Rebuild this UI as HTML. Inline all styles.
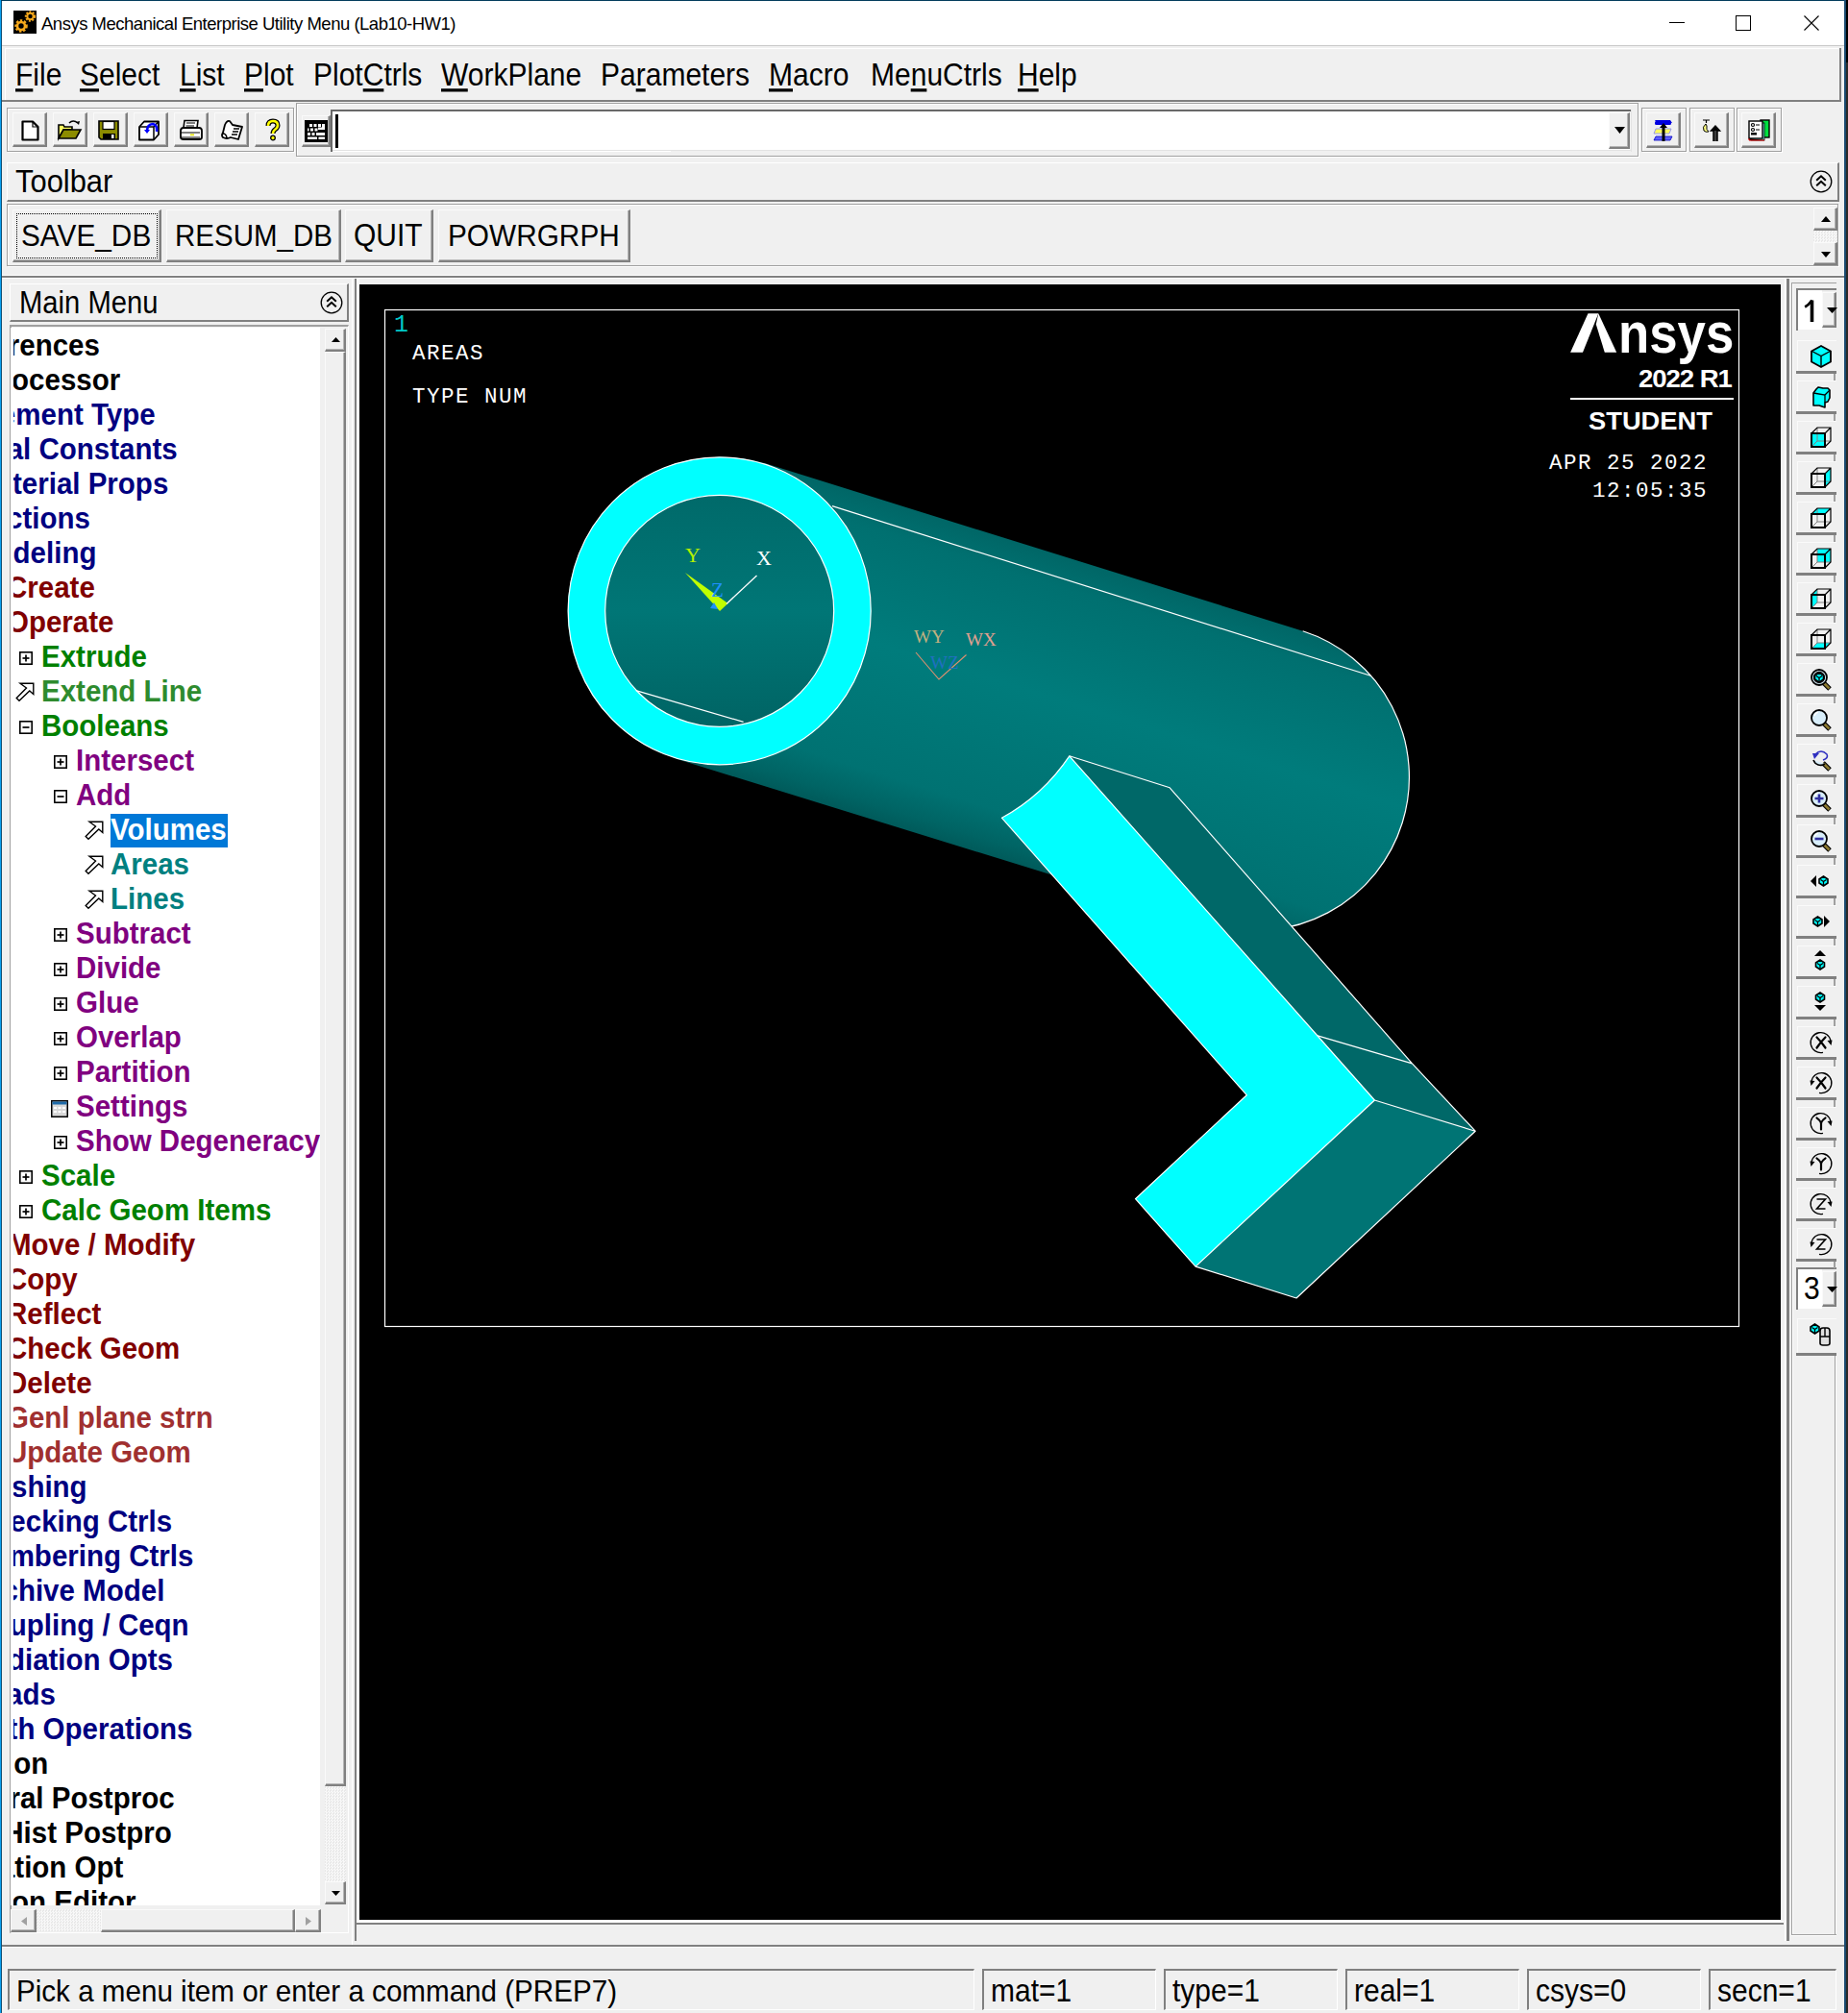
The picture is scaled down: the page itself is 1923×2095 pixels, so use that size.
<!DOCTYPE html><html><head><meta charset="utf-8"><style>
*{box-sizing:border-box;margin:0;padding:0}
html,body{width:1923px;height:2095px;overflow:hidden;background:#f0f0f0;font-family:"Liberation Sans",sans-serif;color:#000}
.a{position:absolute}
.t{position:absolute;white-space:nowrap;line-height:1}
svg{position:absolute;overflow:visible}
.btn{position:absolute;background:#f0f0f0;border-top:1px solid #fff;border-left:1px solid #fff;border-right:2px solid #696969;border-bottom:2px solid #696969}
.btn:before{content:"";position:absolute;left:0;top:0;right:0;bottom:0;border-top:1px solid #e3e3e3;border-left:1px solid #e3e3e3;border-right:1px solid #a0a0a0;border-bottom:1px solid #a0a0a0}
.grp{position:absolute;border-top:1px solid #a0a0a0;border-left:1px solid #a0a0a0;border-right:1px solid #fff;border-bottom:1px solid #fff;box-shadow:1px 1px 0 #a0a0a0, inset 1px 1px 0 #fff}
.rz{position:absolute;border-top:1px solid #fff;border-left:1px solid #fff;border-right:2px solid #808080;border-bottom:2px solid #808080}
.sk{position:absolute;border-top:2px solid #808080;border-left:2px solid #808080;border-right:1px solid #fff;border-bottom:1px solid #fff}
.f30{font-size:30px}
.sy{transform:scaleY(1.08);transform-origin:0 83.3%}
.mm{font-size:29.5px;font-weight:bold}
u{text-decoration:underline;text-decoration-thickness:3px;text-underline-offset:3px;text-decoration-skip-ink:none}
</style></head><body>
<div class="a" style="left:0px;top:0px;width:1923px;height:1px;background:#033d5c;"></div>
<div class="a" style="left:0px;top:0px;width:1px;height:2095px;background:#0aa0f0;"></div>
<div class="a" style="left:1px;top:1px;width:1px;height:2094px;background:#114e72;"></div>
<div class="a" style="left:1919px;top:0px;width:2px;height:2095px;background:#1a4a70;"></div>
<div class="a" style="left:1921px;top:0px;width:2px;height:65px;background:#000;"></div>
<div class="a" style="left:1921px;top:65px;width:2px;height:2030px;background:#2b2a28;"></div>
<div class="a" style="left:2px;top:1px;width:1917px;height:46px;background:#fff;"></div>
<div class="a" style="left:2px;top:47px;width:1917px;height:1px;background:#c8c8c8;"></div>
<svg style="left:14px;top:11px" width="24" height="24" viewBox="0 0 24 24">
<rect width="24" height="24" fill="#000"/>
<g fill="none" stroke="#f5a81c" stroke-width="3.2" stroke-dasharray="2.2 1.6"><circle cx="8" cy="16" r="5.2"/></g>
<circle cx="8" cy="16" r="4" fill="none" stroke="#f5a81c" stroke-width="2.6"/>
<g fill="none" stroke="#f5a81c" stroke-width="2.6" stroke-dasharray="1.8 1.4"><circle cx="17.5" cy="6" r="4.4"/></g>
<circle cx="17.5" cy="6" r="3.2" fill="none" stroke="#f5a81c" stroke-width="2"/>
</svg>
<div class="t" style="left:43px;top:15.6px;font-size:18.5px;color:#000;letter-spacing:-0.49px">Ansys Mechanical Enterprise Utility Menu (Lab10-HW1)</div>
<div class="a" style="left:1737px;top:23px;width:16px;height:1px;background:#000;"></div>
<div class="a" style="left:1806px;top:16px;width:16px;height:16px;border:1px solid #000"></div>
<svg style="left:1877px;top:16px" width="16" height="16" viewBox="0 0 16 16"><path d="M0.5 0.5L15.5 15.5M15.5 0.5L0.5 15.5" stroke="#000" stroke-width="1.1"/></svg>
<div class="a" style="left:5px;top:50px;width:1911px;height:1px;background:#fff;"></div>
<div class="a" style="left:5px;top:50px;width:1px;height:54px;background:#fff;"></div>
<div class="a" style="left:2px;top:104px;width:1914px;height:2px;background:#808080;"></div>
<div class="a" style="left:1914px;top:50px;width:2px;height:56px;background:#808080;"></div>
<div class="t sy" style="left:16px;top:64.01px;font-size:30px;color:#000;"><u>F</u>ile</div>
<div class="t sy" style="left:83px;top:64.01px;font-size:30px;color:#000;"><u>S</u>elect</div>
<div class="t sy" style="left:187px;top:64.01px;font-size:30px;color:#000;"><u>L</u>ist</div>
<div class="t sy" style="left:254px;top:64.01px;font-size:30px;color:#000;"><u>P</u>lot</div>
<div class="t sy" style="left:326px;top:64.01px;font-size:30px;color:#000;">Plot<u>C</u>trls</div>
<div class="t sy" style="left:459px;top:64.01px;font-size:30px;color:#000;"><u>W</u>orkPlane</div>
<div class="t sy" style="left:625px;top:64.01px;font-size:30px;color:#000;">Pa<u>r</u>ameters</div>
<div class="t sy" style="left:800px;top:64.01px;font-size:30px;color:#000;"><u>M</u>acro</div>
<div class="t sy" style="left:906px;top:64.01px;font-size:30px;color:#000;">Me<u>n</u>uCtrls</div>
<div class="t sy" style="left:1059px;top:64.01px;font-size:30px;color:#000;"><u>H</u>elp</div>
<div class="a" style="left:7px;top:112px;width:299px;height:46px;border-top:1px solid #a0a0a0;border-left:1px solid #a0a0a0;border-right:1px solid #a0a0a0;border-bottom:1px solid #a0a0a0;box-shadow:inset 1px 1px 0 #fff, 1px 1px 0 #fff"></div>
<div class="a" style="left:13px;top:117px;width:36px;height:36px;background:#f0f0f0;border-top:1px solid #fafafa;border-left:1px solid #fafafa;border-right:2px solid #808080;border-bottom:2px solid #808080;box-shadow:inset -1px -1px 0 #b4b4b4"><svg style="left:8px;top:7px" width="20" height="22" viewBox="0 0 20 22"><path d="M1.5 1.5H12L17.5 7V20.5H1.5Z" fill="#fff" stroke="#000" stroke-width="2.2" stroke-linejoin="round"/><path d="M12 1.5V7H17.5" fill="none" stroke="#000" stroke-width="1.2"/></svg></div>
<div class="a" style="left:55px;top:117px;width:36px;height:36px;background:#f0f0f0;border-top:1px solid #fafafa;border-left:1px solid #fafafa;border-right:2px solid #808080;border-bottom:2px solid #808080;box-shadow:inset -1px -1px 0 #b4b4b4"><svg style="left:4px;top:6px" width="26" height="22" viewBox="0 0 26 22"><path d="M1 6H6L7 8H15V11H6L1 20Z" fill="#ffff60" stroke="#000" stroke-width="1.6"/><path d="M1 20L6 11H24L19 20Z" fill="#8c8c00" stroke="#000" stroke-width="1.6"/><path d="M12 4Q16 0 21 4" fill="none" stroke="#000" stroke-width="1.6"/><path d="M19 3L23 2L22 6Z" fill="#000"/></svg></div>
<div class="a" style="left:97px;top:117px;width:36px;height:36px;background:#f0f0f0;border-top:1px solid #fafafa;border-left:1px solid #fafafa;border-right:2px solid #808080;border-bottom:2px solid #808080;box-shadow:inset -1px -1px 0 #b4b4b4"><svg style="left:4px;top:7px" width="24" height="24" viewBox="0 0 24 24"><path d="M1 1H21V20H3L1 18Z" fill="#8c8c00" stroke="#000" stroke-width="1.6"/><rect x="5" y="1.5" width="12" height="8" fill="#fff" stroke="#000" stroke-width="1.2"/><rect x="5" y="14" width="13" height="6" fill="#000"/><rect x="14" y="15" width="2.5" height="4" fill="#fff"/></svg></div>
<div class="a" style="left:139px;top:117px;width:36px;height:36px;background:#f0f0f0;border-top:1px solid #fafafa;border-left:1px solid #fafafa;border-right:2px solid #808080;border-bottom:2px solid #808080;box-shadow:inset -1px -1px 0 #b4b4b4"><svg style="left:4px;top:7px" width="24" height="24" viewBox="0 0 24 24"><path d="M1 7L6 1.5H21V15L16 20.5H1Z" fill="#fff" stroke="#000" stroke-width="1.8" stroke-linejoin="round"/><path d="M1 7H16V20.5M16 7L21 1.5" fill="none" stroke="#000" stroke-width="1.5"/><path d="M9 12Q9 4 15 4Q20 5 19 12" fill="none" stroke="#0000ff" stroke-width="2.6"/><path d="M6 10H12L9 14Z" fill="#0000ff"/></svg></div>
<div class="a" style="left:181px;top:117px;width:36px;height:36px;background:#f0f0f0;border-top:1px solid #fafafa;border-left:1px solid #fafafa;border-right:2px solid #808080;border-bottom:2px solid #808080;box-shadow:inset -1px -1px 0 #b4b4b4"><svg style="left:4px;top:6px" width="26" height="24" viewBox="0 0 26 24"><path d="M6 1.5H20L19 9H5Z" fill="#fff" stroke="#000" stroke-width="1.6"/><path d="M8 4H17M7.5 7H16" stroke="#000" stroke-width="1.2"/><path d="M2 12Q2 9 5 9H21Q24 9 24 12V19Q24 21 21 21H5Q2 21 2 19Z" fill="#fff" stroke="#000" stroke-width="1.8"/><path d="M2 14H22M2 19H22" stroke="#000" stroke-width="1.2"/><rect x="12" y="15.5" width="4" height="1.6" fill="#e0e000"/></svg></div>
<div class="a" style="left:223px;top:117px;width:36px;height:36px;background:#f0f0f0;border-top:1px solid #fafafa;border-left:1px solid #fafafa;border-right:2px solid #808080;border-bottom:2px solid #808080;box-shadow:inset -1px -1px 0 #b4b4b4"><svg style="left:5px;top:6px" width="26" height="24" viewBox="0 0 26 24"><path d="M5 6Q7 1 10 2L13 6L23 8L19 21L11 19Q7 21 3 19Q1 17 3 14Z" fill="#fff" stroke="#000" stroke-width="1.8" stroke-linejoin="round"/><path d="M14 10H20M13 13H19M12 16H18M3 15Q6 15 7 19" fill="none" stroke="#000" stroke-width="1.5"/></svg></div>
<div class="a" style="left:265px;top:117px;width:36px;height:36px;background:#f0f0f0;border-top:1px solid #fafafa;border-left:1px solid #fafafa;border-right:2px solid #808080;border-bottom:2px solid #808080;box-shadow:inset -1px -1px 0 #b4b4b4"><svg style="left:10px;top:6px" width="16" height="24" viewBox="0 0 16 24"><path d="M3 7Q3 2 8 2Q13 2 13 6.5Q13 9 10 11Q8 12.5 8 15" fill="none" stroke="#000" stroke-width="5"/><path d="M3 7Q3 2 8 2Q13 2 13 6.5Q13 9 10 11Q8 12.5 8 15" fill="none" stroke="#ffff00" stroke-width="2.6"/><circle cx="8" cy="19.5" r="2.3" fill="#ffff00" stroke="#000" stroke-width="1.3"/></svg></div>
<div class="a" style="left:308px;top:107px;width:1397px;height:56px;border-top:1px solid #a0a0a0;border-left:1px solid #a0a0a0;border-right:1px solid #a0a0a0;border-bottom:1px solid #a0a0a0;box-shadow:inset 1px 1px 0 #fff, 1px 1px 0 #fff"></div>
<div class="a" style="left:314px;top:120px;width:30px;height:33px;background:#f0f0f0;border-top:1px solid #fafafa;border-left:1px solid #fafafa;border-right:2px solid #808080;border-bottom:2px solid #808080;box-shadow:inset -1px -1px 0 #b4b4b4"><svg style="left:2px;top:4px" width="24" height="23" viewBox="0 0 24 23"><rect width="24" height="23" fill="#000"/><g fill="#fff"><rect x="5" y="4" width="3" height="3"/><rect x="9.5" y="4" width="3" height="3"/><rect x="14" y="4" width="3" height="3"/><path d="M18 4H21V10H14V7.5H18Z"/><rect x="3" y="8.5" width="1.5" height="3"/><rect x="6" y="8.5" width="3" height="3"/><rect x="10.5" y="8.5" width="3" height="3"/><rect x="3" y="13" width="3" height="3"/><rect x="7.5" y="13" width="3" height="3"/><rect x="12" y="13" width="9" height="3"/><rect x="3" y="17.5" width="10" height="2.5"/><rect x="14.5" y="17.5" width="6.5" height="2.5"/></g></svg></div>
<div class="a" style="left:344px;top:114px;width:354px;height:44px;border-top:2px solid #696969;border-left:2px solid #696969;background:#fff"></div>
<div class="a" style="left:346px;top:116px;width:1350px;height:41px;background:#fff;"></div>
<div class="a" style="left:344px;top:114px;width:1354px;height:2px;background:#696969;"></div>
<div class="a" style="left:344px;top:114px;width:2px;height:44px;background:#696969;"></div>
<div class="a" style="left:346px;top:156px;width:1352px;height:1px;background:#e3e3e3;"></div>
<div class="a" style="left:1697px;top:114px;width:1px;height:44px;background:#e3e3e3;"></div>
<div class="a" style="left:349px;top:119px;width:3px;height:35px;background:#000;"></div>
<div class="a" style="left:1674px;top:117px;width:22px;height:38px;background:#f0f0f0;border-top:1px solid #fafafa;border-left:1px solid #fafafa;border-right:2px solid #808080;border-bottom:2px solid #808080;box-shadow:inset -1px -1px 0 #b4b4b4"><svg style="left:5px;top:14px" width="11" height="7" viewBox="0 0 11 7"><path d="M0 0H11L5.5 7Z" fill="#000"/></svg></div>
<div class="a" style="left:1708px;top:112px;width:47px;height:46px;border-top:1px solid #a0a0a0;border-left:1px solid #a0a0a0;border-right:1px solid #a0a0a0;border-bottom:1px solid #a0a0a0;box-shadow:inset 1px 1px 0 #fff, 1px 1px 0 #fff"></div>
<div class="a" style="left:1758px;top:112px;width:47px;height:46px;border-top:1px solid #a0a0a0;border-left:1px solid #a0a0a0;border-right:1px solid #a0a0a0;border-bottom:1px solid #a0a0a0;box-shadow:inset 1px 1px 0 #fff, 1px 1px 0 #fff"></div>
<div class="a" style="left:1807px;top:112px;width:47px;height:46px;border-top:1px solid #a0a0a0;border-left:1px solid #a0a0a0;border-right:1px solid #a0a0a0;border-bottom:1px solid #a0a0a0;box-shadow:inset 1px 1px 0 #fff, 1px 1px 0 #fff"></div>
<div class="a" style="left:1713px;top:117px;width:36px;height:37px;background:#f0f0f0;border-top:1px solid #fafafa;border-left:1px solid #fafafa;border-right:2px solid #808080;border-bottom:2px solid #808080;box-shadow:inset -1px -1px 0 #b4b4b4"><svg style="left:5px;top:6px" width="24" height="24" viewBox="0 0 24 24"><path d="M3 1H19L21 4H5Z" fill="#0000e0"/><rect x="3" y="2" width="17" height="4" rx="1.5" fill="#0000e0"/><path d="M4 10H20L18 15H2Z" fill="#ffff60" stroke="#8080ff" stroke-width="0.8"/><path d="M4 18H21L19 22H2Z" fill="#6060ff" stroke="#0000c0" stroke-width="0.8"/><path d="M10.5 23V9H8L12 4L16 9H13.5V23Z" fill="#000"/></svg></div>
<div class="a" style="left:1763px;top:117px;width:36px;height:37px;background:#f0f0f0;border-top:1px solid #fafafa;border-left:1px solid #fafafa;border-right:2px solid #808080;border-bottom:2px solid #808080;box-shadow:inset -1px -1px 0 #b4b4b4"><svg style="left:5px;top:5px" width="26" height="26" viewBox="0 0 26 26"><path d="M3 2H10M6.5 2V5" stroke="#000" stroke-width="1.2"/><path d="M6 6Q2 9 4 13Q6 15 9 14Q6 12 7 8Z" fill="#ffff80" stroke="#000" stroke-width="1"/><path d="M14 24V13H11.5L16 8L20.5 13H18V24" fill="none" stroke="#000" stroke-width="1.5"/><path d="M12 13L16 8L20 13Z" fill="#000"/><path d="M15 13V24M17 13V24" stroke="#000" stroke-width="1.5"/></svg></div>
<div class="a" style="left:1812px;top:117px;width:36px;height:37px;background:#f0f0f0;border-top:1px solid #fafafa;border-left:1px solid #fafafa;border-right:2px solid #808080;border-bottom:2px solid #808080;box-shadow:inset -1px -1px 0 #b4b4b4"><svg style="left:5px;top:5px" width="26" height="26" viewBox="0 0 26 26"><rect x="14" y="2" width="9" height="18" fill="#00e040" stroke="#000" stroke-width="1.4"/><rect x="4" y="5" width="14" height="18" fill="#80e0e0" stroke="#000" stroke-width="0.8"/><rect x="2" y="3" width="14" height="18" fill="#fff" stroke="#000" stroke-width="1.4"/><path d="M2 21V23H18" stroke="#e00000" stroke-width="1"/><g stroke="#000" stroke-width="1.2" fill="none"><circle cx="6" cy="7" r="1.5"/><circle cx="6" cy="12" r="1.5"/><path d="M9 7H13M9 12H13"/></g><rect x="4" y="15" width="6" height="2.5" fill="#000"/></svg></div>
<div class="a" style="left:7px;top:169px;width:1907px;height:41px;border-top:1px solid #fff;border-left:1px solid #fff;border-right:2px solid #808080;border-bottom:2px solid #808080"></div>
<div class="t sy" style="left:16px;top:175.01px;font-size:30px;color:#000;transform:scale(1.03,1.08)">Toolbar</div>
<svg style="left:1883px;top:177px" width="24" height="24" viewBox="0 0 24 24"><circle cx="12" cy="12" r="10.8" fill="none" stroke="#000" stroke-width="1.3"/><path d="M7.2 10.8L12 6.3L16.8 10.8M7.2 16.3L12 11.8L16.8 16.3" fill="none" stroke="#000" stroke-width="2"/></svg>
<div class="a" style="left:7px;top:212px;width:1906px;height:65px;border-top:1px solid #a0a0a0;border-left:1px solid #a0a0a0;border-right:1px solid #a0a0a0;border-bottom:1px solid #a0a0a0;box-shadow:inset 1px 1px 0 #fff, 1px 1px 0 #fff"></div>
<div class="a" style="left:13px;top:218px;width:155px;height:55px;background:#f0f0f0;border-top:1px solid #fafafa;border-left:1px solid #fafafa;border-right:2px solid #808080;border-bottom:2px solid #808080;box-shadow:inset -1px -1px 0 #b4b4b4"></div>
<div class="a" style="left:173px;top:218px;width:182px;height:55px;background:#f0f0f0;border-top:1px solid #fafafa;border-left:1px solid #fafafa;border-right:2px solid #808080;border-bottom:2px solid #808080;box-shadow:inset -1px -1px 0 #b4b4b4"></div>
<div class="a" style="left:359px;top:218px;width:92px;height:55px;background:#f0f0f0;border-top:1px solid #fafafa;border-left:1px solid #fafafa;border-right:2px solid #808080;border-bottom:2px solid #808080;box-shadow:inset -1px -1px 0 #b4b4b4"></div>
<div class="a" style="left:456px;top:218px;width:200px;height:55px;background:#f0f0f0;border-top:1px solid #fafafa;border-left:1px solid #fafafa;border-right:2px solid #808080;border-bottom:2px solid #808080;box-shadow:inset -1px -1px 0 #b4b4b4"></div>
<div class="t sy" style="left:22px;top:231.18px;font-size:29.8px;color:#000;">SAVE_DB</div>
<div class="a" style="left:17px;top:222px;width:147px;height:47px;border:1px dotted #000"></div>
<div class="t sy" style="left:182px;top:231.43px;font-size:29.5px;color:#000;">RESUM_DB</div>
<div class="t sy" style="left:368px;top:231.01px;font-size:30px;color:#000;">QUIT</div>
<div class="t sy" style="left:466px;top:231.18px;font-size:29.8px;color:#000;">POWRGRPH</div>
<div class="a" style="left:1887px;top:216px;width:25px;height:24px;background:#f0f0f0;border-top:1px solid #fafafa;border-left:1px solid #fafafa;border-right:2px solid #808080;border-bottom:2px solid #808080;box-shadow:inset -1px -1px 0 #b4b4b4"><svg style="left:7px;top:8px" width="10" height="6" viewBox="0 0 10 6"><path d="M0 6H10L5 0Z" fill="#000"/></svg></div>
<div class="a" style="left:1887px;top:240px;width:25px;height:12px;background:repeating-conic-gradient(#f8f8f8 0 25%,#e8e8e8 0 50%) 0 0/3px 3px"></div>
<div class="a" style="left:1887px;top:252px;width:25px;height:24px;background:#f0f0f0;border-top:1px solid #fafafa;border-left:1px solid #fafafa;border-right:2px solid #808080;border-bottom:2px solid #808080;box-shadow:inset -1px -1px 0 #b4b4b4"><svg style="left:7px;top:9px" width="10" height="6" viewBox="0 0 10 6"><path d="M0 0H10L5 6Z" fill="#000"/></svg></div>
<div class="a" style="left:2px;top:286px;width:1917px;height:1px;background:#fff;"></div>
<div class="a" style="left:2px;top:287px;width:1917px;height:2px;background:#808080;"></div>
<div class="a" style="left:2px;top:289px;width:1917px;height:1px;background:#fff;"></div>
<div class="a" style="left:10px;top:295px;width:353px;height:40px;border-top:1px solid #fff;border-left:1px solid #fff;border-right:2px solid #808080;border-bottom:2px solid #808080"></div>
<div class="t sy" style="left:19.8px;top:300.51px;font-size:30px;color:#000;transform:scale(0.974,1.08)">Main Menu</div>
<svg style="left:333px;top:303px" width="24" height="24" viewBox="0 0 24 24"><circle cx="12" cy="12" r="10.8" fill="none" stroke="#000" stroke-width="1.3"/><path d="M7.2 10.8L12 6.3L16.8 10.8M7.2 16.3L12 11.8L16.8 16.3" fill="none" stroke="#000" stroke-width="2"/></svg>
<div class="a" style="left:10px;top:338px;width:353px;height:1674px;border-top:2px solid #a0a0a0;border-left:2px solid #a0a0a0;border-right:1px solid #fff;border-bottom:1px solid #fff;box-shadow:inset 1px 1px 0 #696969"></div>
<div class="a" style="left:12px;top:340px;width:350px;height:1671px;background:#f0f0f0"></div>
<div class="a" style="left:11px;top:341px;width:322px;height:1642px;background:#fff"></div>
<div class="a" id="tree" style="left:14px;top:341px;width:319px;height:1642px;background:#fff;overflow:hidden">
<div class="t mm sy" style="left:-79px;top:4.43px;color:#000">Preferences</div>
<div class="t mm sy" style="left:-79px;top:40.43px;color:#000">Preprocessor</div>
<div class="t mm sy" style="left:-42px;top:76.43px;color:#000080">Element Type</div>
<div class="t mm sy" style="left:-44px;top:112.43px;color:#000080">Real Constants</div>
<div class="t mm sy" style="left:-42px;top:148.43px;color:#000080">Material Props</div>
<div class="t mm sy" style="left:-43px;top:184.43px;color:#000080">Sections</div>
<div class="t mm sy" style="left:-43px;top:220.43px;color:#000080">Modeling</div>
<div class="t mm sy" style="left:-7px;top:256.43px;color:#800000">Create</div>
<div class="t mm sy" style="left:-7px;top:292.43px;color:#800000">Operate</div>
<div class="t mm sy" style="left:29px;top:328.43px;color:#008000">Extrude</div>
<svg style="left:5.5px;top:337px" width="14" height="14" viewBox="0 0 14 14"><rect x="0.8" y="0.8" width="12.4" height="12.4" fill="#fff" stroke="#000" stroke-width="1.6"/><path d="M3.5 7H10.5" stroke="#000" stroke-width="1.7"/><path d="M7 3.5V10.5" stroke="#000" stroke-width="1.7"/></svg>
<div class="t mm sy" style="left:29px;top:364.43px;color:#2e8b2e">Extend Line</div>
<svg style="left:2px;top:369px" width="20" height="20" viewBox="0 0 20 20"><path d="M5 1.2H18.8V12.5L14.8 9L4 19.2L1.2 16.5L11.5 6L5 1.2Z" fill="#fff" stroke="#000" stroke-width="1.4" stroke-linejoin="miter"/></svg>
<div class="t mm sy" style="left:29px;top:400.43px;color:#008000">Booleans</div>
<svg style="left:5.5px;top:409px" width="14" height="14" viewBox="0 0 14 14"><rect x="0.8" y="0.8" width="12.4" height="12.4" fill="#fff" stroke="#000" stroke-width="1.6"/><path d="M3.5 7H10.5" stroke="#000" stroke-width="1.7"/></svg>
<div class="t mm sy" style="left:65px;top:436.43px;color:#800080">Intersect</div>
<svg style="left:41.5px;top:445px" width="14" height="14" viewBox="0 0 14 14"><rect x="0.8" y="0.8" width="12.4" height="12.4" fill="#fff" stroke="#000" stroke-width="1.6"/><path d="M3.5 7H10.5" stroke="#000" stroke-width="1.7"/><path d="M7 3.5V10.5" stroke="#000" stroke-width="1.7"/></svg>
<div class="t mm sy" style="left:65px;top:472.43px;color:#800080">Add</div>
<svg style="left:41.5px;top:481px" width="14" height="14" viewBox="0 0 14 14"><rect x="0.8" y="0.8" width="12.4" height="12.4" fill="#fff" stroke="#000" stroke-width="1.6"/><path d="M3.5 7H10.5" stroke="#000" stroke-width="1.7"/></svg>
<div class="a" style="left:100.5px;top:506px;width:122px;height:35px;background:#0078d7"></div>
<div class="t mm sy" style="left:101px;top:508.43px;color:#fff">Volumes</div>
<svg style="left:74px;top:513px" width="20" height="20" viewBox="0 0 20 20"><path d="M5 1.2H18.8V12.5L14.8 9L4 19.2L1.2 16.5L11.5 6L5 1.2Z" fill="#fff" stroke="#000" stroke-width="1.4" stroke-linejoin="miter"/></svg>
<div class="t mm sy" style="left:101px;top:544.43px;color:#008080">Areas</div>
<svg style="left:74px;top:549px" width="20" height="20" viewBox="0 0 20 20"><path d="M5 1.2H18.8V12.5L14.8 9L4 19.2L1.2 16.5L11.5 6L5 1.2Z" fill="#fff" stroke="#000" stroke-width="1.4" stroke-linejoin="miter"/></svg>
<div class="t mm sy" style="left:101px;top:580.43px;color:#008080">Lines</div>
<svg style="left:74px;top:585px" width="20" height="20" viewBox="0 0 20 20"><path d="M5 1.2H18.8V12.5L14.8 9L4 19.2L1.2 16.5L11.5 6L5 1.2Z" fill="#fff" stroke="#000" stroke-width="1.4" stroke-linejoin="miter"/></svg>
<div class="t mm sy" style="left:65px;top:616.43px;color:#800080">Subtract</div>
<svg style="left:41.5px;top:625px" width="14" height="14" viewBox="0 0 14 14"><rect x="0.8" y="0.8" width="12.4" height="12.4" fill="#fff" stroke="#000" stroke-width="1.6"/><path d="M3.5 7H10.5" stroke="#000" stroke-width="1.7"/><path d="M7 3.5V10.5" stroke="#000" stroke-width="1.7"/></svg>
<div class="t mm sy" style="left:65px;top:652.43px;color:#800080">Divide</div>
<svg style="left:41.5px;top:661px" width="14" height="14" viewBox="0 0 14 14"><rect x="0.8" y="0.8" width="12.4" height="12.4" fill="#fff" stroke="#000" stroke-width="1.6"/><path d="M3.5 7H10.5" stroke="#000" stroke-width="1.7"/><path d="M7 3.5V10.5" stroke="#000" stroke-width="1.7"/></svg>
<div class="t mm sy" style="left:65px;top:688.43px;color:#800080">Glue</div>
<svg style="left:41.5px;top:697px" width="14" height="14" viewBox="0 0 14 14"><rect x="0.8" y="0.8" width="12.4" height="12.4" fill="#fff" stroke="#000" stroke-width="1.6"/><path d="M3.5 7H10.5" stroke="#000" stroke-width="1.7"/><path d="M7 3.5V10.5" stroke="#000" stroke-width="1.7"/></svg>
<div class="t mm sy" style="left:65px;top:724.43px;color:#800080">Overlap</div>
<svg style="left:41.5px;top:733px" width="14" height="14" viewBox="0 0 14 14"><rect x="0.8" y="0.8" width="12.4" height="12.4" fill="#fff" stroke="#000" stroke-width="1.6"/><path d="M3.5 7H10.5" stroke="#000" stroke-width="1.7"/><path d="M7 3.5V10.5" stroke="#000" stroke-width="1.7"/></svg>
<div class="t mm sy" style="left:65px;top:760.43px;color:#800080">Partition</div>
<svg style="left:41.5px;top:769px" width="14" height="14" viewBox="0 0 14 14"><rect x="0.8" y="0.8" width="12.4" height="12.4" fill="#fff" stroke="#000" stroke-width="1.6"/><path d="M3.5 7H10.5" stroke="#000" stroke-width="1.7"/><path d="M7 3.5V10.5" stroke="#000" stroke-width="1.7"/></svg>
<div class="t mm sy" style="left:65px;top:796.43px;color:#800080">Settings</div>
<svg style="left:39px;top:804px" width="18" height="18" viewBox="0 0 18 18"><rect x="0.75" y="0.75" width="16.5" height="16.5" fill="#d8d8d8" stroke="#000" stroke-width="1.5"/><rect x="1.5" y="1.5" width="15" height="3" fill="#1e6aa8"/><g fill="#fff"><rect x="3" y="7" width="3" height="2"/><rect x="7.5" y="7" width="3" height="2"/><rect x="12" y="7" width="3" height="2"/><rect x="3" y="11" width="3" height="2"/><rect x="7.5" y="11" width="3" height="2"/><rect x="12" y="11" width="3" height="2"/></g></svg>
<div class="t mm sy" style="left:65px;top:832.43px;color:#800080">Show Degeneracy</div>
<svg style="left:41.5px;top:841px" width="14" height="14" viewBox="0 0 14 14"><rect x="0.8" y="0.8" width="12.4" height="12.4" fill="#fff" stroke="#000" stroke-width="1.6"/><path d="M3.5 7H10.5" stroke="#000" stroke-width="1.7"/><path d="M7 3.5V10.5" stroke="#000" stroke-width="1.7"/></svg>
<div class="t mm sy" style="left:29px;top:868.43px;color:#008000">Scale</div>
<svg style="left:5.5px;top:877px" width="14" height="14" viewBox="0 0 14 14"><rect x="0.8" y="0.8" width="12.4" height="12.4" fill="#fff" stroke="#000" stroke-width="1.6"/><path d="M3.5 7H10.5" stroke="#000" stroke-width="1.7"/><path d="M7 3.5V10.5" stroke="#000" stroke-width="1.7"/></svg>
<div class="t mm sy" style="left:29px;top:904.43px;color:#008000">Calc Geom Items</div>
<svg style="left:5.5px;top:913px" width="14" height="14" viewBox="0 0 14 14"><rect x="0.8" y="0.8" width="12.4" height="12.4" fill="#fff" stroke="#000" stroke-width="1.6"/><path d="M3.5 7H10.5" stroke="#000" stroke-width="1.7"/><path d="M7 3.5V10.5" stroke="#000" stroke-width="1.7"/></svg>
<div class="t mm sy" style="left:-6px;top:940.43px;color:#800000">Move / Modify</div>
<div class="t mm sy" style="left:-7px;top:976.43px;color:#800000">Copy</div>
<div class="t mm sy" style="left:-7px;top:1012.43px;color:#800000">Reflect</div>
<div class="t mm sy" style="left:-7px;top:1048.43px;color:#800000">Check Geom</div>
<div class="t mm sy" style="left:-7px;top:1084.43px;color:#800000">Delete</div>
<div class="t mm sy" style="left:-7px;top:1120.43px;color:#a03030">Genl plane strn</div>
<div class="t mm sy" style="left:-7px;top:1156.43px;color:#a03030">Update Geom</div>
<div class="t mm sy" style="left:-43px;top:1192.43px;color:#000080">Meshing</div>
<div class="t mm sy" style="left:-43px;top:1228.43px;color:#000080">Checking Ctrls</div>
<div class="t mm sy" style="left:-43.7px;top:1264.43px;color:#000080">Numbering Ctrls</div>
<div class="t mm sy" style="left:-44.3px;top:1300.43px;color:#000080">Archive Model</div>
<div class="t mm sy" style="left:-43.5px;top:1336.43px;color:#000080">Coupling / Ceqn</div>
<div class="t mm sy" style="left:-43.8px;top:1372.43px;color:#000080">Radiation Opts</div>
<div class="t mm sy" style="left:-43px;top:1408.43px;color:#000080">Loads</div>
<div class="t mm sy" style="left:-41.5px;top:1444.43px;color:#000080">Path Operations</div>
<div class="t mm sy" style="left:-81.7px;top:1480.43px;color:#000">Solution</div>
<div class="t mm sy" style="left:-78.3px;top:1516.43px;color:#000">General Postproc</div>
<div class="t mm sy" style="left:-79px;top:1552.43px;color:#000">TimeHist Postpro</div>
<div class="t mm sy" style="left:-79px;top:1588.43px;color:#000">Radiation Opt</div>
<div class="t mm sy" style="left:-79px;top:1624.43px;color:#000">Session Editor</div>
</div>
<div class="a" style="left:333px;top:341px;width:28px;height:1642px;background:#f0f0f0"></div>
<div class="a" style="left:338px;top:1859px;width:22px;height:99px;background:repeating-conic-gradient(#f8f8f8 0 25%,#e8e8e8 0 50%) 0 0/3px 3px"></div>
<div class="a" style="left:338px;top:342px;width:22px;height:24px;background:#f0f0f0;border-top:1px solid #fafafa;border-left:1px solid #fafafa;border-right:2px solid #808080;border-bottom:2px solid #808080;box-shadow:inset -1px -1px 0 #b4b4b4"><svg style="left:6px;top:8px" width="9" height="5" viewBox="0 0 9 5"><path d="M0 5H9L4.5 0Z" fill="#000"/></svg></div>
<div class="a" style="left:338px;top:366px;width:22px;height:1493px;background:#f0f0f0;border-top:1px solid #fafafa;border-left:1px solid #fafafa;border-right:2px solid #808080;border-bottom:2px solid #808080;box-shadow:inset -1px -1px 0 #b4b4b4"></div>
<div class="a" style="left:338px;top:1958px;width:22px;height:24px;background:#f0f0f0;border-top:1px solid #fafafa;border-left:1px solid #fafafa;border-right:2px solid #808080;border-bottom:2px solid #808080;box-shadow:inset -1px -1px 0 #b4b4b4"><svg style="left:6px;top:9px" width="9" height="5" viewBox="0 0 9 5"><path d="M0 0H9L4.5 5Z" fill="#000"/></svg></div>
<div class="a" style="left:12px;top:1987px;width:322px;height:23px;background:repeating-conic-gradient(#f8f8f8 0 25%,#e8e8e8 0 50%) 0 0/3px 3px"></div>
<div class="a" style="left:11px;top:1987px;width:27px;height:24px;background:#f0f0f0;border-top:1px solid #fafafa;border-left:1px solid #fafafa;border-right:2px solid #808080;border-bottom:2px solid #808080;box-shadow:inset -1px -1px 0 #b4b4b4"><svg style="left:10px;top:7px" width="6" height="9" viewBox="0 0 6 9"><path d="M6 0V9L0 4.5Z" fill="#a0a0a0"/></svg></div>
<div class="a" style="left:105px;top:1987px;width:202px;height:24px;background:#f0f0f0;border-top:1px solid #fafafa;border-left:1px solid #fafafa;border-right:2px solid #808080;border-bottom:2px solid #808080;box-shadow:inset -1px -1px 0 #b4b4b4"></div>
<div class="a" style="left:307px;top:1987px;width:27px;height:24px;background:#f0f0f0;border-top:1px solid #fafafa;border-left:1px solid #fafafa;border-right:2px solid #808080;border-bottom:2px solid #808080;box-shadow:inset -1px -1px 0 #b4b4b4"><svg style="left:10px;top:7px" width="6" height="9" viewBox="0 0 6 9"><path d="M0 0V9L6 4.5Z" fill="#a0a0a0"/></svg></div>
<div class="a" style="left:363px;top:290px;width:4px;height:1735px;background:#f0f0f0;"></div>
<div class="a" style="left:366px;top:290px;width:1px;height:1735px;background:#fff;"></div>
<div class="a" style="left:368.5px;top:290px;width:2.5px;height:1730px;background:#808080;"></div>
<div class="a" style="left:371px;top:290px;width:3px;height:1709px;background:#f8f8f8;"></div>
<div class="a" style="left:374px;top:296px;width:1479px;height:1702px;background:#000;"></div>
<div class="a" style="left:371px;top:1999px;width:1485px;height:3px;background:#fff;"></div>
<div class="a" style="left:371px;top:2001px;width:1485px;height:2px;background:#808080;"></div>
<div class="a" style="left:1857px;top:290px;width:2px;height:1730px;background:#fff;"></div>
<div class="a" style="left:1859px;top:290px;width:3px;height:1730px;background:#808080;"></div>
<svg style="left:373px;top:296px" width="1480" height="1702" viewBox="373 296 1480 1702">
<defs>
<linearGradient id="tg" gradientUnits="userSpaceOnUse" x1="796.5" y1="482.3" x2="701.2" y2="789.0">
<stop offset="0" stop-color="#006666"/><stop offset="0.1" stop-color="#007070"/><stop offset="0.45" stop-color="#007c7c"/><stop offset="0.85" stop-color="#007272"/><stop offset="0.95" stop-color="#006464"/><stop offset="1" stop-color="#005a5a"/>
</linearGradient>
<linearGradient id="ig" gradientUnits="userSpaceOnUse" x1="748" y1="516" x2="748" y2="756">
<stop offset="0" stop-color="#006a6a"/><stop offset="0.5" stop-color="#007676"/><stop offset="1" stop-color="#006464"/>
</linearGradient>
</defs>
<rect x="400.5" y="322.5" width="1409" height="1058" fill="none" stroke="#fff" stroke-width="1.2"/>
<path d="M796.5 482.3 L1355.7 656.7 A159.85 159.85 0 0 1 1260.9 962.0 L701.2 789.0 A160.6 160.6 0 0 1 796.5 482.3Z" fill="url(#tg)"/>
<path d="M866 526.6 L1427 703.5" stroke="#fff" stroke-width="1.2"/>
<path d="M1355.7 656.7 A159.85 159.85 0 0 1 1260.9 962.0" fill="none" stroke="#fff" stroke-width="1.2"/>
<ellipse cx="748.7" cy="635.8" rx="157.5" ry="160" fill="#00ffff" stroke="#fff" stroke-width="1.2"/>
<ellipse cx="748.7" cy="635.8" rx="119" ry="120.5" fill="url(#ig)" stroke="#fff" stroke-width="1.2"/>
<path d="M661.7 718.7 L773.6 751.3" stroke="#fff" stroke-width="1.2"/>
<!-- bar side faces -->
<path d="M1111 790 L1112.8 786.8 L1217.2 819.8 L1469.5 1106.8 L1535.2 1177.2 L1430.4 1145 L1420 1140 Z" fill="#006868"/>
<path d="M1430.4 1145 L1535.2 1177.2 L1349 1351 L1244.1 1318.1 Z" fill="#007474"/>
<!-- cyan L face -->
<path d="M1112.8 786.8 Q1085 828 1042.4 851.2 L1297.3 1139.7 L1181.5 1247.7 L1244.1 1318.1 L1430.4 1145 Z" fill="#00ffff" stroke="#fff" stroke-width="1.2" stroke-linejoin="round"/>
<path d="M1112.8 786.8 L1217.2 819.8 L1469.5 1106.8 L1535.2 1177.2 L1349 1351 L1244.1 1318.1 M1371 1077.9 L1469.5 1106.8 M1430.4 1145 L1535.2 1177.2" fill="none" stroke="#fff" stroke-width="1.2" stroke-linejoin="round"/>
</svg>
<div class="t" style="left:410px;top:326px;font-size:25px;color:#00c8c8;font-family:'Liberation Mono',monospace;">1</div>
<div class="t" style="left:429px;top:356.8px;font-size:22.5px;color:#fff;font-family:'Liberation Mono',monospace;letter-spacing:1.5px;">AREAS</div>
<div class="t" style="left:429px;top:401.6px;font-size:22.5px;color:#fff;font-family:'Liberation Mono',monospace;letter-spacing:1.5px;">TYPE NUM</div>
<div class="t" style="left:1612px;top:470.6px;font-size:22.5px;color:#fff;font-family:'Liberation Mono',monospace;letter-spacing:1.5px;">APR 25 2022</div>
<div class="t" style="left:1657px;top:500.3px;font-size:22.5px;color:#fff;font-family:'Liberation Mono',monospace;letter-spacing:1.5px;">12:05:35</div>
<svg style="left:1630px;top:320px" width="185" height="140" viewBox="0 0 185 140">
<path d="M4.1 46.8 L22.5 6.2 L33.3 6.2 L17 46.8 Z" fill="#fff"/><path d="M33.3 6.2 L52.2 46.8 L39.8 46.8 L30.8 17.5 Z" fill="#fff"/>
</svg>
<div class="t" style="left:1684px;top:317px;font-size:60px;color:#fff;font-weight:bold;transform:scaleX(0.88);transform-origin:0 0">nsys</div>
<div class="t" style="left:1705px;top:381px;font-size:26px;color:#fff;font-weight:bold;letter-spacing:-1px;transform:scaleX(1.06);transform-origin:0 0">2022 R1</div>
<div class="a" style="left:1634px;top:414px;width:170px;height:2px;background:#fff;"></div>
<div class="t" style="left:1653px;top:425px;font-size:26px;color:#fff;font-weight:bold;transform:scaleX(1.05);transform-origin:0 0">STUDENT</div>
<svg style="left:373px;top:296px" width="1480" height="1702" viewBox="373 296 1480 1702">
<path d="M713 596 L757.5 628 L749 636 Z" fill="#c0ff00"/>
<path d="M756 628.5 L787.5 599" stroke="#fff" stroke-width="1.3"/>
<path d="M739 633 L743 627 L747 634 Z" fill="#1e90ff"/>
<path d="M953 679 L977 707 L1005.5 681.5" fill="none" stroke="#e09070" stroke-width="1.1"/>
</svg>
<div class="t" style="left:713px;top:567px;font-size:22px;color:#b4f000;font-family:'Liberation Serif',serif;">Y</div>
<div class="t" style="left:787px;top:570px;font-size:22px;color:#fff;font-family:'Liberation Serif',serif;">X</div>
<div class="t" style="left:740px;top:604px;font-size:21px;color:#1e90ff;font-family:'Liberation Serif',serif;">Z</div>
<div class="t" style="left:951px;top:653px;font-size:19px;color:#c0b080;font-family:'Liberation Serif',serif;">WY</div>
<div class="t" style="left:1005px;top:656px;font-size:19px;color:#e0a090;font-family:'Liberation Serif',serif;">WX</div>
<div class="t" style="left:968px;top:680px;font-size:19px;color:#2070c0;font-family:'Liberation Serif',serif;">WZ</div>
<div class="a" style="left:1862px;top:290px;width:57px;height:1735px;background:#f0f0f0;"></div>
<div class="a" style="left:1857px;top:290px;width:2px;height:1730px;background:#fff;"></div>
<div class="a" style="left:1859px;top:290px;width:3px;height:1730px;background:#808080;"></div>
<div class="a" style="left:1864px;top:294px;width:1px;height:1721px;background:#a0a0a0;"></div>
<div class="a" style="left:1865px;top:294px;width:1px;height:1721px;background:#fff;"></div>
<div class="a" style="left:1864px;top:294px;width:47px;height:1px;background:#a0a0a0;"></div>
<div class="a" style="left:1909px;top:1411px;width:1px;height:603px;background:#a0a0a0;"></div>
<div class="a" style="left:1910px;top:1411px;width:1px;height:603px;background:#fff;"></div>
<div class="a" style="left:1864px;top:2013px;width:47px;height:1px;background:#a0a0a0;"></div>
<div class="a" style="left:1864px;top:2014px;width:47px;height:1px;background:#fff;"></div>
<div class="a" style="left:1869px;top:300px;width:42px;height:44px;background:#f0f0f0"></div>
<div class="a" style="left:1869px;top:300px;width:42px;height:2px;background:#808080;"></div>
<div class="a" style="left:1869px;top:300px;width:2px;height:44px;background:#808080;"></div>
<div class="a" style="left:1871px;top:302px;width:25px;height:41px;background:#fff;"></div>
<div class="a" style="left:1896px;top:304px;width:15px;height:37px;background:#f0f0f0;border-top:1px solid #fafafa;border-left:1px solid #fafafa;border-right:2px solid #808080;border-bottom:2px solid #808080;box-shadow:inset -1px -1px 0 #b4b4b4"><svg style="left:4px;top:15px" width="11" height="6" viewBox="0 0 11 6"><path d="M0 0H11L5.5 6Z" fill="#000"/></svg></div>
<div class="t sy" style="left:1877px;top:308.01px;font-size:30px;color:#000;"></div>
<svg style="left:1876px;top:311px" width="14" height="26" viewBox="0 0 14 26"><path d="M9.5 1.5V24" stroke="#000" stroke-width="3.6"/><path d="M9.5 1.5Q6 6.5 2.2 8.5" fill="none" stroke="#000" stroke-width="2.6"/></svg>
<div class="a" style="left:1869px;top:1319px;width:42px;height:44px;background:#f0f0f0"></div>
<div class="a" style="left:1869px;top:1319px;width:42px;height:2px;background:#808080;"></div>
<div class="a" style="left:1869px;top:1319px;width:2px;height:44px;background:#808080;"></div>
<div class="a" style="left:1871px;top:1321px;width:25px;height:41px;background:#fff;"></div>
<div class="a" style="left:1896px;top:1323px;width:15px;height:37px;background:#f0f0f0;border-top:1px solid #fafafa;border-left:1px solid #fafafa;border-right:2px solid #808080;border-bottom:2px solid #808080;box-shadow:inset -1px -1px 0 #b4b4b4"><svg style="left:4px;top:15px" width="11" height="6" viewBox="0 0 11 6"><path d="M0 0H11L5.5 6Z" fill="#000"/></svg></div>
<div class="t sy" style="left:1877px;top:1327.01px;font-size:30px;color:#000;">3</div>
<div class="a" style="left:1870px;top:354px;width:41px;height:1px;background:#fafafa;"></div>
<div class="a" style="left:1870px;top:354px;width:1px;height:34px;background:#fafafa;"></div>
<div class="a" style="left:1869px;top:386px;width:42px;height:3px;background:#808080;"></div>
<div class="a" style="left:1908px;top:389px;width:2px;height:7px;background:#a0a0a0;"></div>
<svg style="left:1883px;top:359px" width="24" height="24" viewBox="0 0 24 24"><path d="M12 1L22 6.5V17.5L12 23L2 17.5V6.5Z" fill="#00ffff" stroke="#000" stroke-width="1.8" stroke-linejoin="round"/><path d="M2.5 6.5L12 11.5L21.5 6.5M12 11.5V22.5" fill="none" stroke="#000" stroke-width="1.4"/></svg>
<div class="a" style="left:1870px;top:396px;width:41px;height:1px;background:#fafafa;"></div>
<div class="a" style="left:1870px;top:396px;width:1px;height:34px;background:#fafafa;"></div>
<div class="a" style="left:1869px;top:428px;width:42px;height:3px;background:#808080;"></div>
<div class="a" style="left:1908px;top:431px;width:2px;height:7px;background:#a0a0a0;"></div>
<svg style="left:1883px;top:401px" width="24" height="24" viewBox="0 0 24 24"><path d="M9 2L14 3H19L21 5V13L19 17L16 18V23L10 21H4V8L7 4Z" fill="#00ffff" stroke="#000" stroke-width="1.6" stroke-linejoin="round"/><path d="M4 8L16 10V18M16 10L21 5" fill="none" stroke="#000" stroke-width="1.3"/></svg>
<div class="a" style="left:1870px;top:438px;width:41px;height:1px;background:#fafafa;"></div>
<div class="a" style="left:1870px;top:438px;width:1px;height:34px;background:#fafafa;"></div>
<div class="a" style="left:1869px;top:470px;width:42px;height:3px;background:#808080;"></div>
<div class="a" style="left:1908px;top:473px;width:2px;height:7px;background:#a0a0a0;"></div>
<svg style="left:1883px;top:443px" width="24" height="24" viewBox="0 0 24 24"><path d="M2 8H16V22H2Z" fill="#00ffff"/><path d="M8 2V16H22M8 16L2 22" fill="none" stroke="#808080" stroke-width="1"/><path d="M2 8L8 2H22V16L16 22M16 8L22 2" fill="none" stroke="#000" stroke-width="1.2"/><path d="M2 8H16V22H2Z" fill="none" stroke="#000" stroke-width="2"/></svg>
<div class="a" style="left:1870px;top:480px;width:41px;height:1px;background:#fafafa;"></div>
<div class="a" style="left:1870px;top:480px;width:1px;height:34px;background:#fafafa;"></div>
<div class="a" style="left:1869px;top:512px;width:42px;height:3px;background:#808080;"></div>
<div class="a" style="left:1908px;top:515px;width:2px;height:7px;background:#a0a0a0;"></div>
<svg style="left:1883px;top:485px" width="24" height="24" viewBox="0 0 24 24"><path d="M16 8L22 2V16L16 22Z" fill="#00ffff"/><path d="M8 2V16H22M8 16L2 22" fill="none" stroke="#808080" stroke-width="1"/><path d="M2 8L8 2H22V16L16 22M16 8L22 2" fill="none" stroke="#000" stroke-width="1.2"/><path d="M2 8H16V22H2Z" fill="none" stroke="#000" stroke-width="2"/></svg>
<div class="a" style="left:1870px;top:522px;width:41px;height:1px;background:#fafafa;"></div>
<div class="a" style="left:1870px;top:522px;width:1px;height:34px;background:#fafafa;"></div>
<div class="a" style="left:1869px;top:554px;width:42px;height:3px;background:#808080;"></div>
<div class="a" style="left:1908px;top:557px;width:2px;height:7px;background:#a0a0a0;"></div>
<svg style="left:1883px;top:527px" width="24" height="24" viewBox="0 0 24 24"><path d="M2 8L8 2H22L16 8Z" fill="#00ffff"/><path d="M8 2V16H22M8 16L2 22" fill="none" stroke="#808080" stroke-width="1"/><path d="M2 8L8 2H22V16L16 22M16 8L22 2" fill="none" stroke="#000" stroke-width="1.2"/><path d="M2 8H16V22H2Z" fill="none" stroke="#000" stroke-width="2"/></svg>
<div class="a" style="left:1870px;top:564px;width:41px;height:1px;background:#fafafa;"></div>
<div class="a" style="left:1870px;top:564px;width:1px;height:34px;background:#fafafa;"></div>
<div class="a" style="left:1869px;top:596px;width:42px;height:3px;background:#808080;"></div>
<div class="a" style="left:1908px;top:599px;width:2px;height:7px;background:#a0a0a0;"></div>
<svg style="left:1883px;top:569px" width="24" height="24" viewBox="0 0 24 24"><path d="M8 2H22V16H8Z" fill="#00ffff"/><path d="M8 2V16H22M8 16L2 22" fill="none" stroke="#808080" stroke-width="1"/><path d="M2 8L8 2H22V16L16 22M16 8L22 2" fill="none" stroke="#000" stroke-width="1.2"/><path d="M2 8H16V22H2Z" fill="none" stroke="#000" stroke-width="2"/></svg>
<div class="a" style="left:1870px;top:606px;width:41px;height:1px;background:#fafafa;"></div>
<div class="a" style="left:1870px;top:606px;width:1px;height:34px;background:#fafafa;"></div>
<div class="a" style="left:1869px;top:638px;width:42px;height:3px;background:#808080;"></div>
<div class="a" style="left:1908px;top:641px;width:2px;height:7px;background:#a0a0a0;"></div>
<svg style="left:1883px;top:611px" width="24" height="24" viewBox="0 0 24 24"><path d="M2 8L8 2V16L2 22Z" fill="#00ffff"/><path d="M8 2V16H22M8 16L2 22" fill="none" stroke="#808080" stroke-width="1"/><path d="M2 8L8 2H22V16L16 22M16 8L22 2" fill="none" stroke="#000" stroke-width="1.2"/><path d="M2 8H16V22H2Z" fill="none" stroke="#000" stroke-width="2"/></svg>
<div class="a" style="left:1870px;top:648px;width:41px;height:1px;background:#fafafa;"></div>
<div class="a" style="left:1870px;top:648px;width:1px;height:34px;background:#fafafa;"></div>
<div class="a" style="left:1869px;top:680px;width:42px;height:3px;background:#808080;"></div>
<div class="a" style="left:1908px;top:683px;width:2px;height:7px;background:#a0a0a0;"></div>
<svg style="left:1883px;top:653px" width="24" height="24" viewBox="0 0 24 24"><path d="M2 22L8 16H22L16 22Z" fill="#00ffff"/><path d="M8 2V16H22M8 16L2 22" fill="none" stroke="#808080" stroke-width="1"/><path d="M2 8L8 2H22V16L16 22M16 8L22 2" fill="none" stroke="#000" stroke-width="1.2"/><path d="M2 8H16V22H2Z" fill="none" stroke="#000" stroke-width="2"/></svg>
<div class="a" style="left:1870px;top:690px;width:41px;height:1px;background:#fafafa;"></div>
<div class="a" style="left:1870px;top:690px;width:1px;height:34px;background:#fafafa;"></div>
<div class="a" style="left:1869px;top:722px;width:42px;height:3px;background:#808080;"></div>
<div class="a" style="left:1908px;top:725px;width:2px;height:7px;background:#a0a0a0;"></div>
<svg style="left:1883px;top:695px" width="24" height="24" viewBox="0 0 24 24"><path d="M14 15L21 22" stroke="#000" stroke-width="5"/><path d="M14.5 15.5L20.5 21.5" stroke="#8c7a30" stroke-width="2.6"/><circle cx="10" cy="10" r="8" fill="#d8eefa" stroke="#000" stroke-width="1.8"/><path d="M5 8Q6 5 9 4" stroke="#fff" stroke-width="1.5" fill="none"/><circle cx="10" cy="10" r="5.5" fill="none" stroke="#000" stroke-width="1.3"/><g transform="translate(5.5,5)"><path d="M0 3L4.5 0L9 3V7L4.5 10L0 7Z" fill="#00ffff" stroke="#000" stroke-width="1.6"/><path d="M1.5 3.5L4.5 5.5L7.5 3.5M4.5 5.5V9" fill="none" stroke="#000" stroke-width="1.3"/></g></svg>
<div class="a" style="left:1870px;top:732px;width:41px;height:1px;background:#fafafa;"></div>
<div class="a" style="left:1870px;top:732px;width:1px;height:34px;background:#fafafa;"></div>
<div class="a" style="left:1869px;top:764px;width:42px;height:3px;background:#808080;"></div>
<div class="a" style="left:1908px;top:767px;width:2px;height:7px;background:#a0a0a0;"></div>
<svg style="left:1883px;top:737px" width="24" height="24" viewBox="0 0 24 24"><path d="M14 15L21 22" stroke="#000" stroke-width="5"/><path d="M14.5 15.5L20.5 21.5" stroke="#8c7a30" stroke-width="2.6"/><circle cx="10" cy="10" r="8" fill="#d8eefa" stroke="#000" stroke-width="1.8"/><path d="M5 8Q6 5 9 4" stroke="#fff" stroke-width="1.5" fill="none"/></svg>
<div class="a" style="left:1870px;top:774px;width:41px;height:1px;background:#fafafa;"></div>
<div class="a" style="left:1870px;top:774px;width:1px;height:34px;background:#fafafa;"></div>
<div class="a" style="left:1869px;top:806px;width:42px;height:3px;background:#808080;"></div>
<div class="a" style="left:1908px;top:809px;width:2px;height:7px;background:#a0a0a0;"></div>
<svg style="left:1883px;top:779px" width="24" height="24" viewBox="0 0 24 24"><path d="M14 15L21 22" stroke="#000" stroke-width="5"/><path d="M14.5 15.5L20.5 21.5" stroke="#8c7a30" stroke-width="2.6"/><path d="M4 12A8 8 0 0 0 16 16" fill="#d8eefa" stroke="#000" stroke-width="1.6"/><path d="M6 6Q12 0 18 6Q20 10 14 12" fill="none" stroke="#3030c0" stroke-width="1.6"/><path d="M3 5L10 5L5 11Z" fill="#3030c0"/></svg>
<div class="a" style="left:1870px;top:816px;width:41px;height:1px;background:#fafafa;"></div>
<div class="a" style="left:1870px;top:816px;width:1px;height:34px;background:#fafafa;"></div>
<div class="a" style="left:1869px;top:848px;width:42px;height:3px;background:#808080;"></div>
<div class="a" style="left:1908px;top:851px;width:2px;height:7px;background:#a0a0a0;"></div>
<svg style="left:1883px;top:821px" width="24" height="24" viewBox="0 0 24 24"><path d="M14 15L21 22" stroke="#000" stroke-width="5"/><path d="M14.5 15.5L20.5 21.5" stroke="#8c7a30" stroke-width="2.6"/><circle cx="10" cy="10" r="8" fill="#d8eefa" stroke="#000" stroke-width="1.8"/><path d="M5 8Q6 5 9 4" stroke="#fff" stroke-width="1.5" fill="none"/><path d="M10 5.5V14.5M5.5 10H14.5" stroke="#3030a0" stroke-width="2.6"/></svg>
<div class="a" style="left:1870px;top:858px;width:41px;height:1px;background:#fafafa;"></div>
<div class="a" style="left:1870px;top:858px;width:1px;height:34px;background:#fafafa;"></div>
<div class="a" style="left:1869px;top:890px;width:42px;height:3px;background:#808080;"></div>
<div class="a" style="left:1908px;top:893px;width:2px;height:7px;background:#a0a0a0;"></div>
<svg style="left:1883px;top:863px" width="24" height="24" viewBox="0 0 24 24"><path d="M14 15L21 22" stroke="#000" stroke-width="5"/><path d="M14.5 15.5L20.5 21.5" stroke="#8c7a30" stroke-width="2.6"/><circle cx="10" cy="10" r="8" fill="#d8eefa" stroke="#000" stroke-width="1.8"/><path d="M5 8Q6 5 9 4" stroke="#fff" stroke-width="1.5" fill="none"/><path d="M5.5 10H14.5" stroke="#3030a0" stroke-width="2.6"/></svg>
<div class="a" style="left:1870px;top:900px;width:41px;height:1px;background:#fafafa;"></div>
<div class="a" style="left:1870px;top:900px;width:1px;height:34px;background:#fafafa;"></div>
<div class="a" style="left:1869px;top:932px;width:42px;height:3px;background:#808080;"></div>
<div class="a" style="left:1908px;top:935px;width:2px;height:7px;background:#a0a0a0;"></div>
<svg style="left:1883px;top:905px" width="24" height="24" viewBox="0 0 24 24"><path d="M1 12L7 6V18Z" fill="#000"/><g transform="translate(10,7)"><path d="M0 3L4.5 0L9 3V7L4.5 10L0 7Z" fill="#00ffff" stroke="#000" stroke-width="1.6"/><path d="M1.5 3.5L4.5 5.5L7.5 3.5M4.5 5.5V9" fill="none" stroke="#000" stroke-width="1.3"/></g></svg>
<div class="a" style="left:1870px;top:942px;width:41px;height:1px;background:#fafafa;"></div>
<div class="a" style="left:1870px;top:942px;width:1px;height:34px;background:#fafafa;"></div>
<div class="a" style="left:1869px;top:974px;width:42px;height:3px;background:#808080;"></div>
<div class="a" style="left:1908px;top:977px;width:2px;height:7px;background:#a0a0a0;"></div>
<svg style="left:1883px;top:947px" width="24" height="24" viewBox="0 0 24 24"><g transform="translate(4,7)"><path d="M0 3L4.5 0L9 3V7L4.5 10L0 7Z" fill="#00ffff" stroke="#000" stroke-width="1.6"/><path d="M1.5 3.5L4.5 5.5L7.5 3.5M4.5 5.5V9" fill="none" stroke="#000" stroke-width="1.3"/></g><path d="M21 12L15 6V18Z" fill="#000"/></svg>
<div class="a" style="left:1870px;top:984px;width:41px;height:1px;background:#fafafa;"></div>
<div class="a" style="left:1870px;top:984px;width:1px;height:34px;background:#fafafa;"></div>
<div class="a" style="left:1869px;top:1016px;width:42px;height:3px;background:#808080;"></div>
<div class="a" style="left:1908px;top:1019px;width:2px;height:7px;background:#a0a0a0;"></div>
<svg style="left:1883px;top:989px" width="24" height="24" viewBox="0 0 24 24"><path d="M5 6L11 0L17 6Z" fill="#000"/><g transform="translate(6.5,10)"><path d="M0 3L4.5 0L9 3V7L4.5 10L0 7Z" fill="#00ffff" stroke="#000" stroke-width="1.6"/><path d="M1.5 3.5L4.5 5.5L7.5 3.5M4.5 5.5V9" fill="none" stroke="#000" stroke-width="1.3"/></g></svg>
<div class="a" style="left:1870px;top:1026px;width:41px;height:1px;background:#fafafa;"></div>
<div class="a" style="left:1870px;top:1026px;width:1px;height:34px;background:#fafafa;"></div>
<div class="a" style="left:1869px;top:1058px;width:42px;height:3px;background:#808080;"></div>
<div class="a" style="left:1908px;top:1061px;width:2px;height:7px;background:#a0a0a0;"></div>
<svg style="left:1883px;top:1031px" width="24" height="24" viewBox="0 0 24 24"><g transform="translate(6.5,2)"><path d="M0 3L4.5 0L9 3V7L4.5 10L0 7Z" fill="#00ffff" stroke="#000" stroke-width="1.6"/><path d="M1.5 3.5L4.5 5.5L7.5 3.5M4.5 5.5V9" fill="none" stroke="#000" stroke-width="1.3"/></g><path d="M5 15L11 21L17 15Z" fill="#000"/></svg>
<div class="a" style="left:1870px;top:1068px;width:41px;height:1px;background:#fafafa;"></div>
<div class="a" style="left:1870px;top:1068px;width:1px;height:34px;background:#fafafa;"></div>
<div class="a" style="left:1869px;top:1100px;width:42px;height:3px;background:#808080;"></div>
<div class="a" style="left:1908px;top:1103px;width:2px;height:7px;background:#a0a0a0;"></div>
<svg style="left:1883px;top:1073px" width="24" height="24" viewBox="0 0 24 24"><path d="M14 22.3A10.5 10.5 0 1 1 22 10.5" fill="none" stroke="#000" stroke-width="1.3"/><path d="M18.5 10L23.5 9.5L22.5 15Z" fill="#000"/><path d="M7.5 6.5Q12 11 16.5 17.5M16.5 6.5Q12 11 7.5 17.5" stroke="#000" stroke-width="2.2" fill="none" stroke-linecap="round"/></svg>
<div class="a" style="left:1870px;top:1110px;width:41px;height:1px;background:#fafafa;"></div>
<div class="a" style="left:1870px;top:1110px;width:1px;height:34px;background:#fafafa;"></div>
<div class="a" style="left:1869px;top:1142px;width:42px;height:3px;background:#808080;"></div>
<div class="a" style="left:1908px;top:1145px;width:2px;height:7px;background:#a0a0a0;"></div>
<svg style="left:1883px;top:1115px" width="24" height="24" viewBox="0 0 24 24"><path d="M10 22.3A10.5 10.5 0 1 0 2 10.5" fill="none" stroke="#000" stroke-width="1.3"/><path d="M5.5 10L0.5 9.5L1.5 15Z" fill="#000"/><path d="M7.5 6.5Q12 11 16.5 17.5M16.5 6.5Q12 11 7.5 17.5" stroke="#000" stroke-width="2.2" fill="none" stroke-linecap="round"/></svg>
<div class="a" style="left:1870px;top:1152px;width:41px;height:1px;background:#fafafa;"></div>
<div class="a" style="left:1870px;top:1152px;width:1px;height:34px;background:#fafafa;"></div>
<div class="a" style="left:1869px;top:1184px;width:42px;height:3px;background:#808080;"></div>
<div class="a" style="left:1908px;top:1187px;width:2px;height:7px;background:#a0a0a0;"></div>
<svg style="left:1883px;top:1157px" width="24" height="24" viewBox="0 0 24 24"><path d="M14 22.3A10.5 10.5 0 1 1 22 10.5" fill="none" stroke="#000" stroke-width="1.3"/><path d="M18.5 10L23.5 9.5L22.5 15Z" fill="#000"/><path d="M7.5 6.5Q12 10 12 12.5Q12 10 16.5 6.5M12 12V18.5" stroke="#000" stroke-width="2.2" fill="none" stroke-linecap="round"/></svg>
<div class="a" style="left:1870px;top:1194px;width:41px;height:1px;background:#fafafa;"></div>
<div class="a" style="left:1870px;top:1194px;width:1px;height:34px;background:#fafafa;"></div>
<div class="a" style="left:1869px;top:1226px;width:42px;height:3px;background:#808080;"></div>
<div class="a" style="left:1908px;top:1229px;width:2px;height:7px;background:#a0a0a0;"></div>
<svg style="left:1883px;top:1199px" width="24" height="24" viewBox="0 0 24 24"><path d="M10 22.3A10.5 10.5 0 1 0 2 10.5" fill="none" stroke="#000" stroke-width="1.3"/><path d="M5.5 10L0.5 9.5L1.5 15Z" fill="#000"/><path d="M7.5 6.5Q12 10 12 12.5Q12 10 16.5 6.5M12 12V18.5" stroke="#000" stroke-width="2.2" fill="none" stroke-linecap="round"/></svg>
<div class="a" style="left:1870px;top:1236px;width:41px;height:1px;background:#fafafa;"></div>
<div class="a" style="left:1870px;top:1236px;width:1px;height:34px;background:#fafafa;"></div>
<div class="a" style="left:1869px;top:1268px;width:42px;height:3px;background:#808080;"></div>
<div class="a" style="left:1908px;top:1271px;width:2px;height:7px;background:#a0a0a0;"></div>
<svg style="left:1883px;top:1241px" width="24" height="24" viewBox="0 0 24 24"><path d="M14 22.3A10.5 10.5 0 1 1 22 10.5" fill="none" stroke="#000" stroke-width="1.3"/><path d="M18.5 10L23.5 9.5L22.5 15Z" fill="#000"/><path d="M7.5 7H16.5L7.5 17H16.5" stroke="#000" stroke-width="1.6" fill="none"/></svg>
<div class="a" style="left:1870px;top:1278px;width:41px;height:1px;background:#fafafa;"></div>
<div class="a" style="left:1870px;top:1278px;width:1px;height:34px;background:#fafafa;"></div>
<div class="a" style="left:1869px;top:1310px;width:42px;height:3px;background:#808080;"></div>
<div class="a" style="left:1908px;top:1313px;width:2px;height:7px;background:#a0a0a0;"></div>
<svg style="left:1883px;top:1283px" width="24" height="24" viewBox="0 0 24 24"><path d="M10 22.3A10.5 10.5 0 1 0 2 10.5" fill="none" stroke="#000" stroke-width="1.3"/><path d="M5.5 10L0.5 9.5L1.5 15Z" fill="#000"/><path d="M7.5 7H16.5L7.5 17H16.5" stroke="#000" stroke-width="1.6" fill="none"/></svg>
<div class="a" style="left:1870px;top:1372px;width:41px;height:1px;background:#fafafa;"></div>
<div class="a" style="left:1870px;top:1372px;width:1px;height:38px;background:#fafafa;"></div>
<div class="a" style="left:1869px;top:1408px;width:42px;height:3px;background:#808080;"></div>
<svg style="left:1883px;top:1377px" width="26" height="26" viewBox="0 0 26 26"><g transform="translate(1,1)"><path d="M0 3L4.5 0L9 3V7L4.5 10L0 7Z" fill="#00ffff" stroke="#000" stroke-width="1.6"/><path d="M1.5 3.5L4.5 5.5L7.5 3.5M4.5 5.5V9" fill="none" stroke="#000" stroke-width="1.3"/></g><path d="M11 8Q11 5 14 5H18Q21 5 21 8V21Q21 23 18 23H14Q11 23 11 21Z" fill="#e0e0e0" stroke="#000" stroke-width="1.6"/><path d="M11 14H21M16 5V14" stroke="#000" stroke-width="1.4"/></svg>
<div class="a" style="left:2px;top:2024px;width:1917px;height:2px;background:#808080;"></div>
<div class="a" style="left:2px;top:2026px;width:1917px;height:1px;background:#fff;"></div>
<div class="a" style="left:8px;top:2049px;width:1006px;height:46px;border-top:2px solid #808080;border-left:2px solid #808080;border-right:1px solid #fff;border-bottom:1px solid #fff;height:43px"></div>
<div class="t sy" style="left:17px;top:2057.51px;font-size:30px;color:#000;"></div>
<div class="t sy" style="left:17px;top:2057.84px;font-size:29.6px;color:#000;">Pick a menu item or enter a command (PREP7)</div>
<div class="a" style="left:1022px;top:2049px;width:181px;height:46px;border-top:2px solid #808080;border-left:2px solid #808080;border-right:1px solid #fff;border-bottom:1px solid #fff;height:43px"></div>
<div class="t sy" style="left:1031px;top:2057.51px;font-size:30px;color:#000;">mat=1</div>
<div class="a" style="left:1211px;top:2049px;width:181px;height:46px;border-top:2px solid #808080;border-left:2px solid #808080;border-right:1px solid #fff;border-bottom:1px solid #fff;height:43px"></div>
<div class="t sy" style="left:1220px;top:2057.51px;font-size:30px;color:#000;">type=1</div>
<div class="a" style="left:1400px;top:2049px;width:181px;height:46px;border-top:2px solid #808080;border-left:2px solid #808080;border-right:1px solid #fff;border-bottom:1px solid #fff;height:43px"></div>
<div class="t sy" style="left:1409px;top:2057.51px;font-size:30px;color:#000;">real=1</div>
<div class="a" style="left:1589px;top:2049px;width:181px;height:46px;border-top:2px solid #808080;border-left:2px solid #808080;border-right:1px solid #fff;border-bottom:1px solid #fff;height:43px"></div>
<div class="t sy" style="left:1598px;top:2057.51px;font-size:30px;color:#000;">csys=0</div>
<div class="a" style="left:1778px;top:2049px;width:133px;height:46px;border-top:2px solid #808080;border-left:2px solid #808080;border-right:1px solid #fff;border-bottom:1px solid #fff;height:43px"></div>
<div class="t sy" style="left:1787px;top:2057.51px;font-size:30px;color:#000;">secn=1</div>
</body></html>
